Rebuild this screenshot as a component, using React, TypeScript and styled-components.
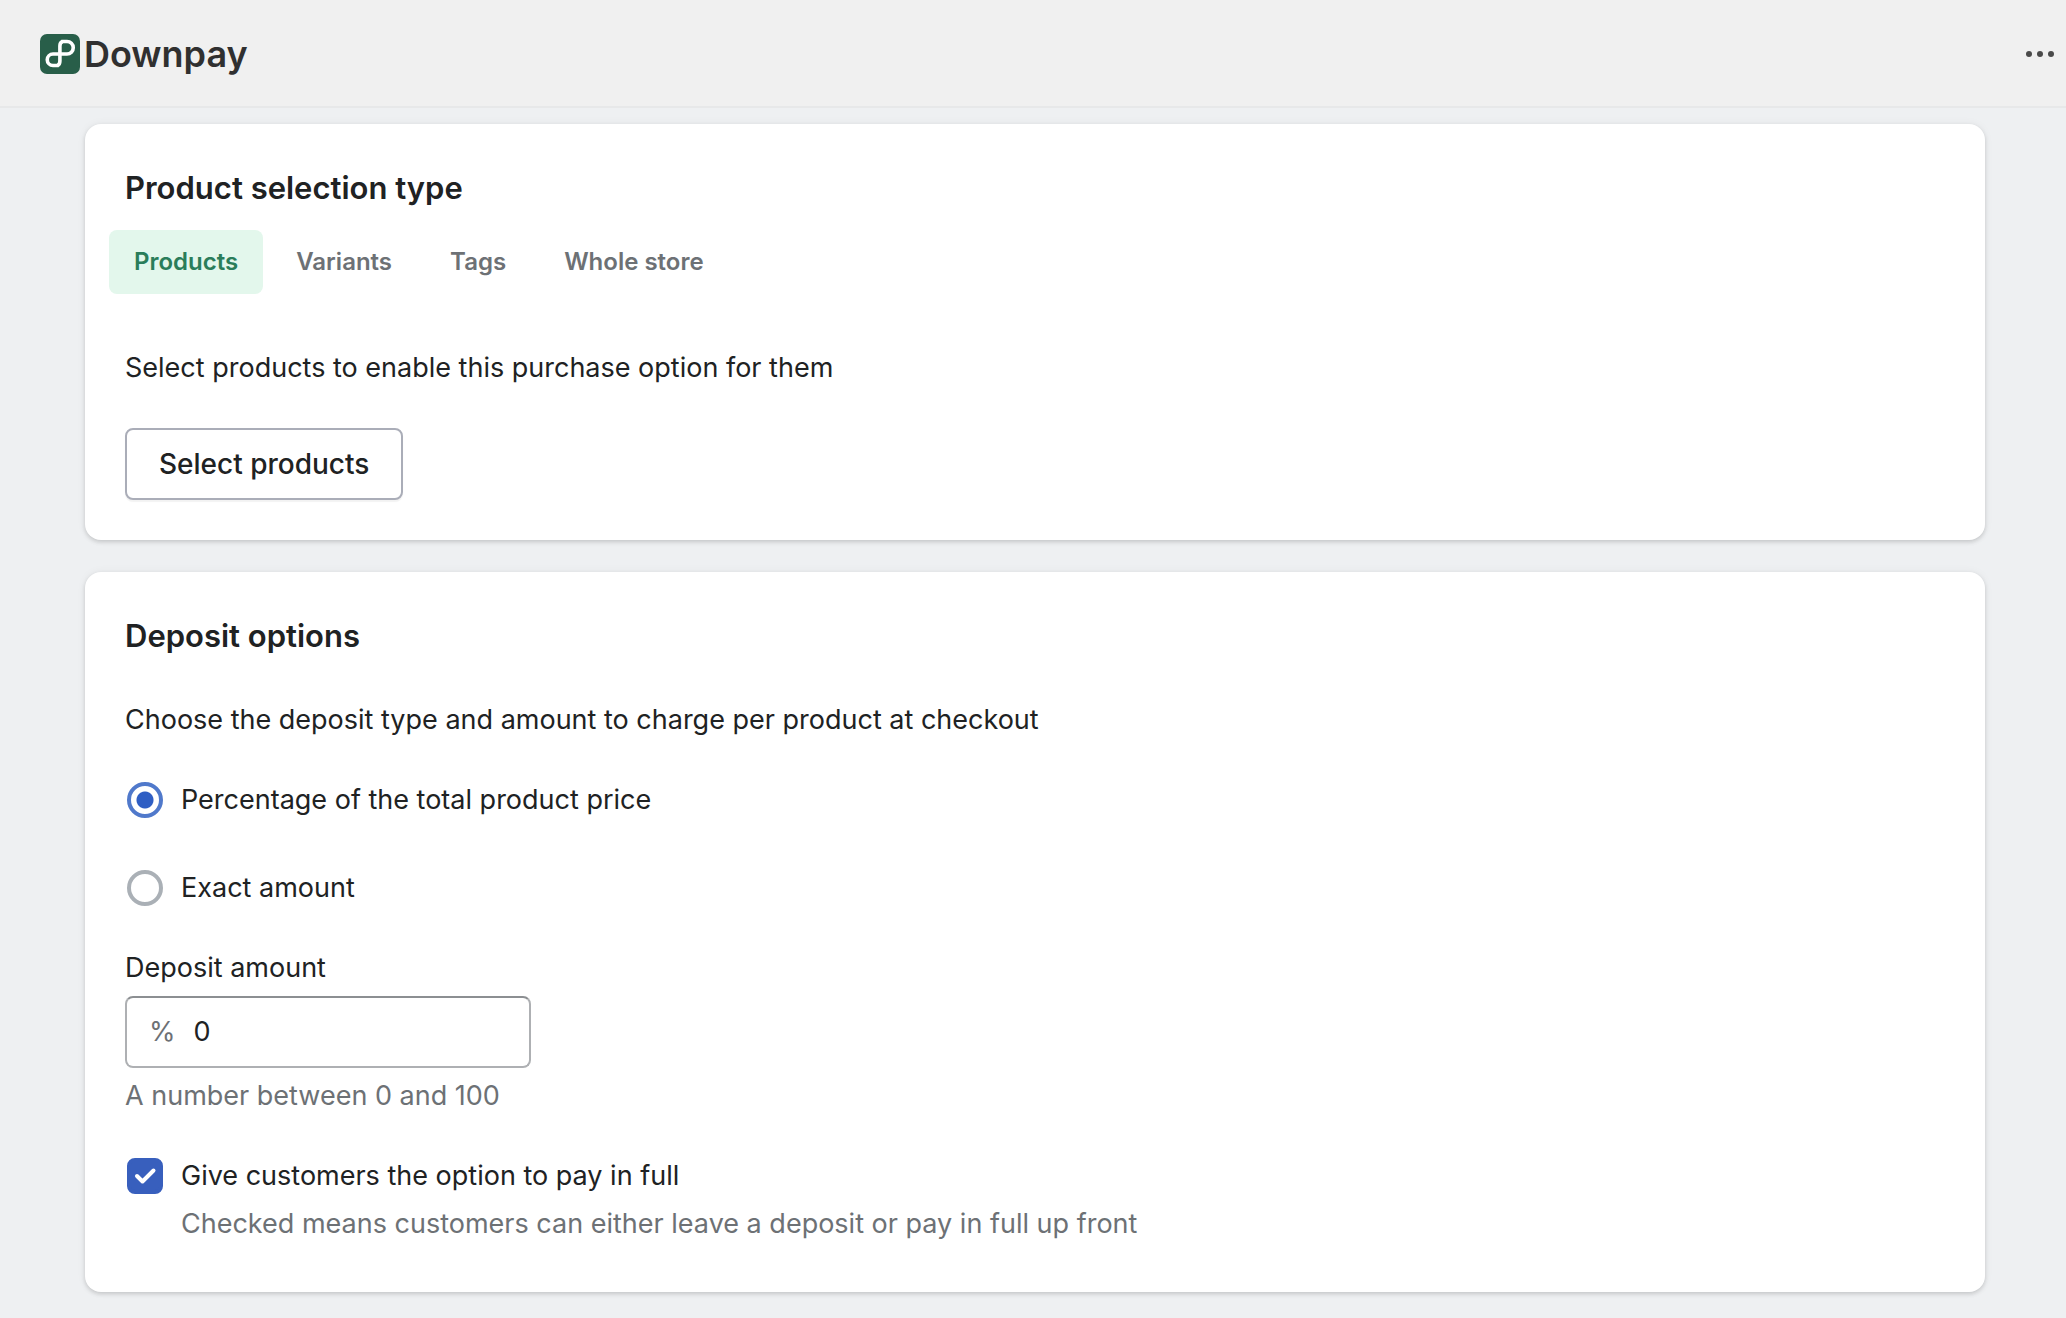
import React, { useState } from "react";
import styled, { createGlobalStyle } from "styled-components";

const GlobalStyle = createGlobalStyle`
  *, *::before, *::after { box-sizing: border-box; }
  body {
    margin: 0;
    background: #eef0f2;
    color: #202223;
    font-family: Inter, "Liberation Sans", sans-serif;
    font-size: 27px;
    line-height: 40px;
  }
  button, input { font: inherit; color: inherit; }
  h1, h2, p { margin: 0; }
`;

const TopBar = styled.header`
  display: flex;
  align-items: center;
  justify-content: space-between;
  height: 108px;
  padding: 2px 6px 0 40px;
  background: #f0f0f0;
  border-bottom: 2px solid #e7e8e9;
`;

const Brand = styled.div`
  display: flex;
  align-items: center;
  gap: 4px;
`;

const BrandName = styled.h1`
  font-size: 36px;
  font-weight: 600;
  line-height: 48px;
  color: #303030;
`;

const MoreButton = styled.button`
  display: flex;
  padding: 0;
  border: 0;
  background: none;
  color: #4a4a4a;
  cursor: pointer;
`;

const Page = styled.main`
  display: flex;
  flex-direction: column;
  gap: 32px;
  padding: 16px 81px 26px 85px;
`;

const Card = styled.section`
  padding: 40px;
  background: #fff;
  border-radius: 16px;
  box-shadow: 0 0 10px rgba(23, 24, 24, 0.05), 0 2px 4px rgba(0, 0, 0, 0.15);
`;

const CardTitle = styled.h2`
  font-size: 31px;
  font-weight: 600;
  line-height: 48px;
`;

const Tabs = styled.div`
  display: flex;
  gap: 8px;
  margin: 18px -16px 54px;
`;

const Tab = styled.button<{ $active: boolean }>`
  height: 64px;
  padding: 0 25px;
  border: 0;
  border-radius: 8px;
  background: ${(p) => (p.$active ? "#e3f7ec" : "transparent")};
  color: ${(p) => (p.$active ? "#2a7d5a" : "#6d7175")};
  font-size: 24px;
  font-weight: 600;
  cursor: pointer;
`;

const SelectButton = styled.button`
  display: block;
  height: 72px;
  margin-top: 40px;
  padding: 0 32px;
  border: 2px solid #aaadb8;
  border-radius: 8px;
  background: #fff;
  box-shadow: 0 2px 1px rgba(0, 0, 0, 0.05);
  font-size: 28px;
  font-weight: 500;
  cursor: pointer;
`;

const Form = styled.form`
  display: flex;
  flex-direction: column;
  gap: 32px;
  margin-top: 40px;
`;

const Choice = styled.div`
  display: grid;
  grid-template-columns: 36px 1fr;
  column-gap: 18px;
  row-gap: 8px;
  align-items: center;
  padding: 8px 2px;
`;

const Radio = styled.input`
  appearance: none;
  width: 36px;
  height: 36px;
  margin: 0;
  border: 4px solid #aab0b6;
  border-radius: 50%;
  background: #fff;

  &:checked {
    border-color: #5079cb;
    background: radial-gradient(circle, #2f5ec4 0 8px, #fff 9px);
  }
`;

const CheckField = styled.span`
  display: grid;
  width: 36px;
  height: 36px;

  > * { grid-area: 1 / 1; }
  > svg { pointer-events: none; }
`;

const Checkbox = styled.input`
  appearance: none;
  width: 36px;
  height: 36px;
  margin: 0;
  border: 4px solid #aab0b6;
  border-radius: 8px;

  &:checked {
    border-color: #385fbd;
    background: #385fbd;
  }
`;

const Help = styled.p`
  color: #6d7175;
`;

const ChoiceHelp = styled(Help)`
  grid-column: 2;
`;

const Field = styled.div`
  display: flex;
  flex-direction: column;
  align-items: flex-start;
  gap: 8px;
`;

const InputBox = styled.div`
  display: flex;
  align-items: center;
  gap: 18px;
  width: 406px;
  max-width: 100%;
  height: 72px;
  padding: 0 22px;
  border: 2px solid #aeb0b3;
  border-top-color: #8c8f92;
  border-radius: 8px;
`;

const Prefix = styled.span`
  color: #6d7175;
`;

const AmountInput = styled.input`
  flex: 1;
  min-width: 0;
  padding: 0;
  border: 0;
  outline: 0;
  background: none;
`;

const tabs = ["Products", "Variants", "Tags", "Whole store"];

const Logo = () => (
  <svg width="40" height="40" viewBox="0 0 40 40" aria-hidden="true">
    <rect width="40" height="40" rx="7" fill="#285e49" />
    <g fill="none" stroke="#fff" strokeWidth="3.6">
      <path d="M21.500 7.500H27a6.250 6.250 0 0 1 0 12.500H13a5.750 5.750 0 0 0 0 11.500h5.500" />
      <path d="M22.500 7.500Q19.900 8.500 19.900 12V27Q19.900 30.500 17.500 31.500" />
    </g>
  </svg>
);

const MoreIcon = () => (
  <svg width="40" height="40" viewBox="0 0 40 40" fill="currentColor" aria-hidden="true">
    <circle cx="9" cy="20" r="3" />
    <circle cx="20" cy="20" r="3" />
    <circle cx="31" cy="20" r="3" />
  </svg>
);

const CheckIcon = () => (
  <svg width="36" height="36" viewBox="0 0 36 36" fill="none" aria-hidden="true">
    <path d="M10 18l5.500 5.500 11-11" stroke="#fff" strokeWidth="4" strokeLinecap="round" strokeLinejoin="round" />
  </svg>
);

export default function App() {
  const [tab, setTab] = useState(tabs[0]);
  const [kind, setKind] = useState("percentage");
  const [amount, setAmount] = useState("0");
  const [payInFull, setPayInFull] = useState(true);

  return (
    <>
      <GlobalStyle />
      <TopBar>
        <Brand>
          <Logo />
          <BrandName>Downpay</BrandName>
        </Brand>
        <MoreButton type="button" aria-label="More actions">
          <MoreIcon />
        </MoreButton>
      </TopBar>
      <Page>
        <Card>
          <CardTitle>Product selection type</CardTitle>
          <Tabs role="tablist">
            {tabs.map((name) => (
              <Tab
                key={name}
                type="button"
                role="tab"
                aria-selected={tab === name}
                $active={tab === name}
                onClick={() => setTab(name)}
              >
                {name}
              </Tab>
            ))}
          </Tabs>
          <p>Select products to enable this purchase option for them</p>
          <SelectButton type="button">Select products</SelectButton>
        </Card>
        <Card>
          <CardTitle>Deposit options</CardTitle>
          <Form>
            <p>Choose the deposit type and amount to charge per product at checkout</p>
            <Choice>
              <Radio
                type="radio"
                id="percentage"
                name="kind"
                checked={kind === "percentage"}
                onChange={() => setKind("percentage")}
              />
              <label htmlFor="percentage">Percentage of the total product price</label>
            </Choice>
            <Choice>
              <Radio
                type="radio"
                id="exact"
                name="kind"
                checked={kind === "exact"}
                onChange={() => setKind("exact")}
              />
              <label htmlFor="exact">Exact amount</label>
            </Choice>
            <Field>
              <label htmlFor="amount">Deposit amount</label>
              <InputBox>
                <Prefix>%</Prefix>
                <AmountInput
                  id="amount"
                  inputMode="numeric"
                  aria-describedby="amount-help"
                  value={amount}
                  onChange={(e) => setAmount(e.target.value)}
                />
              </InputBox>
              <Help id="amount-help">A number between 0 and 100</Help>
            </Field>
            <Choice>
              <CheckField>
                <Checkbox
                  type="checkbox"
                  id="full"
                  aria-describedby="full-help"
                  checked={payInFull}
                  onChange={(e) => setPayInFull(e.target.checked)}
                />
                {payInFull && <CheckIcon />}
              </CheckField>
              <label htmlFor="full">Give customers the option to pay in full</label>
              <ChoiceHelp id="full-help">
                Checked means customers can either leave a deposit or pay in full up front
              </ChoiceHelp>
            </Choice>
          </Form>
        </Card>
      </Page>
    </>
  );
}
